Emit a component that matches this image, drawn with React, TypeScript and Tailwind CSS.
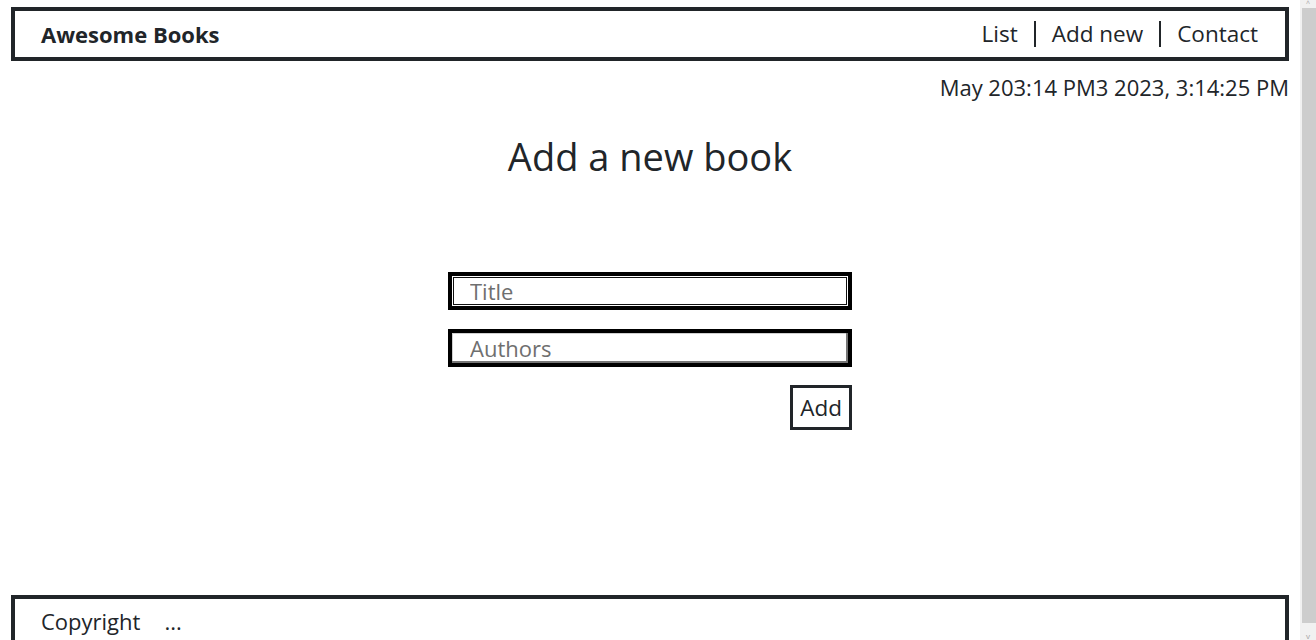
const navLinks = ["List", "Add new", "Contact"];

const Header = () => (
  <header className="flex h-[54px] items-center justify-between border-4 border-[#212529] pl-[26px] pr-[27px]">
    <h1 className="text-[22px] font-bold text-[#212529]">Awesome Books</h1>
    <nav className="flex items-center">
      {navLinks.map((link, i) => (
        <a
          key={link}
          href="#"
          className={`px-4 text-[22.5px] leading-[26px] text-[#212529] ${
            i > 0 ? "border-l-2 border-[#212529]" : ""
          } ${i === navLinks.length - 1 ? "pr-0" : ""}`}
        >
          {link}
        </a>
      ))}
    </nav>
  </header>
);

const AddBookForm = () => (
  <form className="mx-auto flex w-[404px] flex-col">
    <input
      type="text"
      placeholder="Title"
      className="h-[38px] w-full border-4 border-black bg-white px-[18px] text-[22px] text-[#212529] shadow-[inset_0_0_0_1px_#ffffff,inset_0_0_0_2px_#101010] outline-none placeholder:text-[#6f6f6f]"
    />
    <input
      type="text"
      placeholder="Authors"
      className="mt-[19px] h-[38px] w-full border-4 border-black bg-white px-[18px] text-[22px] text-[#212529] shadow-[inset_-2px_-2px_0_#767676,inset_1px_1px_0_#d0d0d0] outline-none placeholder:text-[#6f6f6f]"
    />
    <button
      type="button"
      className="mt-[18px] self-end border-[3px] border-[#212529] bg-white px-[7px] py-[3px] text-[22.5px] leading-[33px] text-[#212529]"
    >
      Add
    </button>
  </form>
);

const Scrollbar = () => (
  <div className="flex w-[16px] shrink-0 flex-col bg-[#f1f1f1]">
    <div className="flex h-[8px] items-start justify-center text-[7px] leading-[7px] text-[#a3a3a3]">
      ^
    </div>
    <div className="ml-[2px] h-[615px] bg-[#cdcdcd]" />
    <div className="flex flex-1 items-end justify-center text-[8px] leading-[8px] text-[#a3a3a3]">
      v
    </div>
  </div>
);

export default function App() {
  return (
    <div
      className="flex h-[640px] overflow-hidden bg-white text-[#212529]"
      style={{ fontFamily: '"Open Sans", "Noto Sans", sans-serif' }}
    >
      <div className="w-[1300px] shrink-0 px-[11px] pt-[7px]">
        <Header />
        <p className="mt-[13px] text-right text-[22px] leading-[26px]">
          May 203:14 PM3 2023, 3:14:25 PM
        </p>
        <h2 className="mt-[33px] text-center text-[38px] leading-[46px]">Add a new book</h2>
        <div className="mt-[93px]">
          <AddBookForm />
        </div>
        <footer className="mt-[165px] flex h-[70px] items-start gap-6 border-4 border-b-0 border-[#212529] pl-[26px] pt-[6px] text-[22px]">
          <span>Copyright</span>
          <span>...</span>
        </footer>
      </div>
      <Scrollbar />
    </div>
  );
}
